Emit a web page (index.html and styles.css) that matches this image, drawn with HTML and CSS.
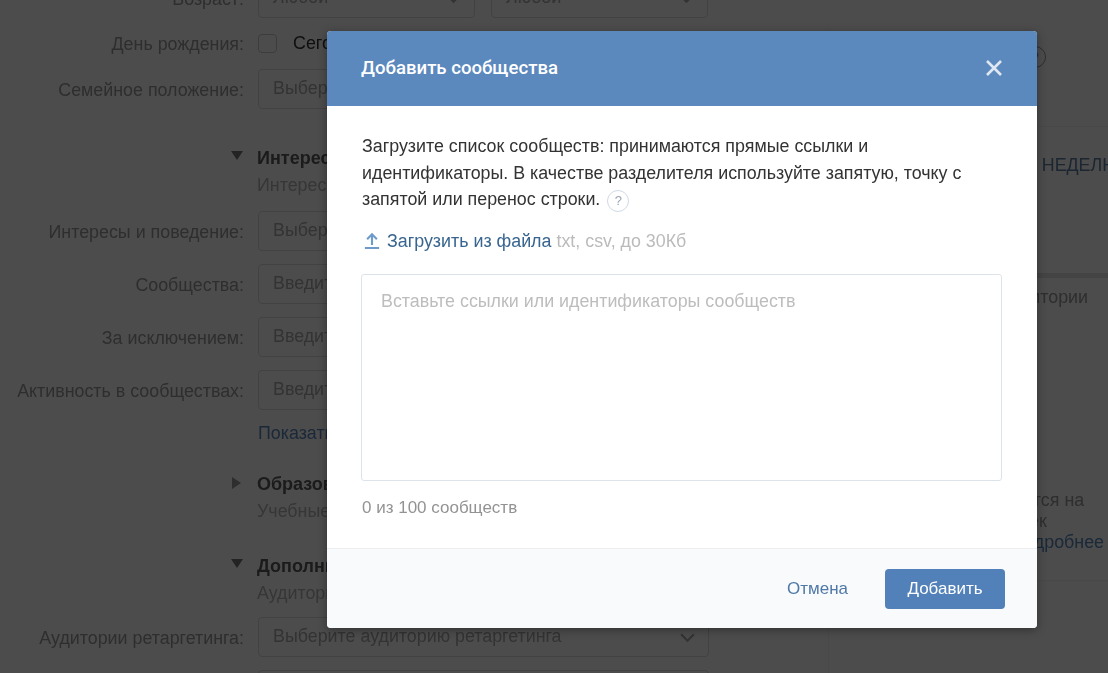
FILE: index.html
```html
<!DOCTYPE html>
<html lang="ru">
<head>
  <meta charset="UTF-8" />
  <title>Добавить сообщества</title>
  <link rel="stylesheet" href="styles.css">
</head>
<body>
  <div class="page">
    <div class="form">
      <div class="row row-age">
        <div class="label">Возраст:</div>
        <div class="pair">
          <div class="field">Любой<svg class="chev" viewBox="0 0 16 10"><path d="M2 2l6 6 6-6"/></svg></div>
          <div class="field">Любой<svg class="chev" viewBox="0 0 16 10"><path d="M2 2l6 6 6-6"/></svg></div>
        </div>
      </div>
      <div class="row row-check">
        <div class="label">День рождения:</div>
        <div class="check-wrap"><span class="check"></span><span class="check-text">Сегодня</span></div>
      </div>
      <div class="row">
        <div class="label">Семейное положение:</div>
        <div class="field">Выберите</div>
      </div>

      <div class="section sec-interests">
        <span class="tri tri-down"></span>
        <div>
          <div class="sec-title">Интересы</div>
          <div class="sec-sub">Интересы</div>
        </div>
      </div>
      <div class="row">
        <div class="label">Интересы и поведение:</div>
        <div class="field">Выберите</div>
      </div>
      <div class="row">
        <div class="label">Сообщества:</div>
        <div class="field">Введите</div>
      </div>
      <div class="row">
        <div class="label">За исключением:</div>
        <div class="field">Введите</div>
      </div>
      <div class="row">
        <div class="label">Активность в сообществах:</div>
        <div class="field">Введите</div>
      </div>
      <a class="show-more">Показать</a>

      <div class="section sec-edu">
        <span class="tri tri-right"></span>
        <div>
          <div class="sec-title">Образование</div>
          <div class="sec-sub">Учебные</div>
        </div>
      </div>
      <div class="section sec-extra">
        <span class="tri tri-down"></span>
        <div>
          <div class="sec-title">Дополнительно</div>
          <div class="sec-sub">Аудитории</div>
        </div>
      </div>
      <div class="row">
        <div class="label">Аудитории ретаргетинга:</div>
        <div class="field">Выберите аудиторию ретаргетинга<svg class="chev" viewBox="0 0 16 10"><path d="M2 2l6 6 6-6"/></svg></div>
      </div>
      <div class="row">
        <div class="label"></div>
        <div class="field"></div>
      </div>
    </div>

    <div class="side">
      <div class="side-top"><span class="side-help">?</span></div>
      <div class="side-week">НА НЕДЕЛЮ</div>
      <div class="side-aud">Аудитории</div>
      <div class="side-note">Показываются на<br>всех человек<br>за день. <a>Подробнее</a></div>
    </div>
  </div>

  <div class="overlay">
    <div class="modal">
      <div class="modal-head">
        <span class="modal-title">Добавить сообщества</span>
        <svg class="close" viewBox="0 0 18 18"><path d="M2 2l14 14M16 2L2 16"/></svg>
      </div>
      <div class="modal-body">
        <p class="intro">Загрузите список сообществ: принимаются прямые ссылки и идентификаторы. В качестве разделителя используйте запятую, точку с запятой или перенос строки. <span class="help">?</span></p>
        <div class="upload">
          <svg class="upload-icon" viewBox="0 0 18 20"><path d="M9 15V3M3.500 8.500L9 3l5.500 5.500M1 18.500h16"/></svg>
          <a class="upload-link">Загрузить из файла</a>
          <span class="upload-hint">txt, csv, до 30Кб</span>
        </div>
        <div class="textarea">Вставьте ссылки или идентификаторы сообществ</div>
        <div class="counter">0 из 100 сообществ</div>
      </div>
      <div class="modal-foot">
        <a class="cancel">Отмена</a>
        <button class="add">Добавить</button>
      </div>
    </div>
  </div>
</body>
</html>
```

FILE: styles.css
```css
html, body { height: 100%; }
body {
  margin: 0;
  overflow: hidden;
  background: #fff;
  font-family: "Liberation Sans", Arial, sans-serif;
  font-size: 17.850px;
  color: #999;
}
a { text-decoration: none; }

.page { display: flex; height: 673px; overflow: hidden; filter: blur(0.5px); }

.form { width: 828px; flex: none; margin-top: -22px; }
.row { display: flex; margin-bottom: 13px; }
.label {
  width: 244px;
  height: 40px;
  margin-right: 14px;
  text-align: right;
  line-height: 42px;
  white-space: nowrap;
  flex: none;
}
.field {
  width: 451px;
  height: 40px;
  box-sizing: border-box;
  border: 1px solid #dcdcdc;
  border-radius: 4px;
  padding: 0 12px 2px 14px;
  color: #aaa;
  display: flex;
  justify-content: space-between;
  align-items: center;
  background: #fff;
  white-space: nowrap;
}
.chev { width: 17px; height: 11px; margin-top: 3px; fill: none; stroke: #aaa; stroke-width: 2; }
.pair { display: flex; gap: 16px; width: 451px; }
.pair .field { width: 217px; }
.row-age { margin-bottom: 14px; }
.row-check { margin-bottom: 15px; height: 22px; align-items: center; }
.check-wrap { display: flex; align-items: center; }
.check {
  width: 19px;
  height: 19px;
  border: 1px solid #c8c8c8;
  border-radius: 4px;
  box-sizing: border-box;
}
.check-text { margin-left: 16px; color: #333; }

.section { display: flex; margin-left: 231px; }
.tri { width: 26px; flex: none; position: relative; }
.tri::before { content: ""; position: absolute; left: 0; top: 7px; }
.tri-down::before {
  border-left: 6px solid transparent;
  border-right: 6px solid transparent;
  border-top: 9px solid #777;
}
.tri-right::before {
  left: 1px;
  border-top: 6px solid transparent;
  border-bottom: 6px solid transparent;
  border-left: 9px solid #999;
}
.sec-title { font-weight: 700; color: #5a5a5a; line-height: 28px; font-size: 18px; white-space: nowrap; }
.sec-sub { color: #b4b4b4; line-height: 26px; }
.sec-interests { margin-top: 35px; margin-bottom: 13px; }
.sec-edu { margin-top: 24px; margin-bottom: 28px; }
.sec-extra { margin-bottom: 11px; }
.show-more { display: block; margin: -3px 0 0 258px; line-height: 26px; color: #5b88bd; }

.side { width: 280px; flex: none; position: relative; border-left: 1px solid #f4f4f4; margin-top: 26px; overflow: hidden; }
.side-top { height: 100px; border-bottom: 1px solid #f0f0f0; background: #fdfdfd; }
.side-help {
  position: absolute;
  left: 195px;
  top: 20px;
  width: 20px;
  height: 20px;
  border: 1px solid #999;
  border-radius: 50%;
  text-align: center;
  font-size: 14px;
  line-height: 20px;
}
.side-week {
  height: 146px;
  box-sizing: border-box;
  padding: 28px 0 0 183px;
  color: #5b7fa6;
  white-space: nowrap;
  overflow: hidden;
}
.side-aud {
  border-top: 5px solid #e4e4e4;
  padding: 9px 21px 0 0;
  height: 196px;
  box-sizing: border-box;
  text-align: right;
}
.side-note {
  padding: 21px 0 27px 110px;
  border-bottom: 1px solid #f0f0f0;
  line-height: 21px;
  white-space: nowrap;
}
.side-note a { color: #5b88bd; }

.overlay {
  position: fixed;
  inset: 0;
  background: rgba(0, 0, 0, 0.7);
  padding: 31px 0 0 327px;
}
.modal {
  width: 710px;
  height: 597px;
  display: flex;
  flex-direction: column;
  border-radius: 4px;
  overflow: hidden;
  background: #fff;
  box-shadow: 0 2px 10px rgba(0, 0, 0, 0.35);
  filter: blur(0.3px);
}
.modal-head {
  height: 75px;
  flex: none;
  box-sizing: border-box;
  background: #5b88bd;
  display: flex;
  align-items: center;
  justify-content: space-between;
  padding: 0 34px 2px;
  color: #fff;
}
.modal-title { font-size: 18.600px; font-weight: 500; font-family: Roboto, sans-serif; }
.close { width: 18px; height: 18px; fill: none; stroke: #dfe8f2; stroke-width: 2.6; }
.modal-body { flex: 1; padding: 27px 35px 0 35px; }
.intro { margin: 0; line-height: 26.500px; color: #333; }
.help {
  display: inline-block;
  width: 22px;
  height: 22px;
  box-sizing: border-box;
  margin: -6px 0 -6px 2px;
  border: 1px solid #cfd9e6;
  border-radius: 50%;
  color: #9aa5b2;
  font-size: 13px;
  line-height: 20px;
  text-align: center;
  vertical-align: 0;
}
.upload { display: flex; align-items: center; margin-top: 15px; line-height: 26px; }
.upload-icon { width: 16px; height: 19px; margin: 0 7px 0 2px; fill: none; stroke: #6f9bcb; stroke-width: 2.400; }
.upload-link { color: #38658f; }
.upload-hint { margin-left: 5px; color: #bbb; }
.textarea {
  height: 207px;
  width: 641px;
  box-sizing: border-box;
  margin: 20px 0 0 -1px;
  padding: 14px 19px;
  border: 1px solid #dde3ea;
  border-radius: 3px;
  color: #bdbdbd;
  line-height: 24px;
}
.counter { margin-top: 15px; line-height: 24px; color: #939393; font-size: 17px; }
.modal-foot {
  height: 80px;
  flex: none;
  box-sizing: border-box;
  background: #f9fafc;
  border-top: 1px solid #edeef0;
  display: flex;
  align-items: center;
  justify-content: flex-end;
  padding: 0 32px 0 0;
}
.cancel { color: #4f78a6; margin-right: 37px; font-size: 17px; }
.add {
  width: 120px;
  height: 40px;
  background: #5181b8;
  color: #fff;
  border: none;
  border-radius: 4px;
  font: 500 17px "Liberation Sans", sans-serif;
}
```
